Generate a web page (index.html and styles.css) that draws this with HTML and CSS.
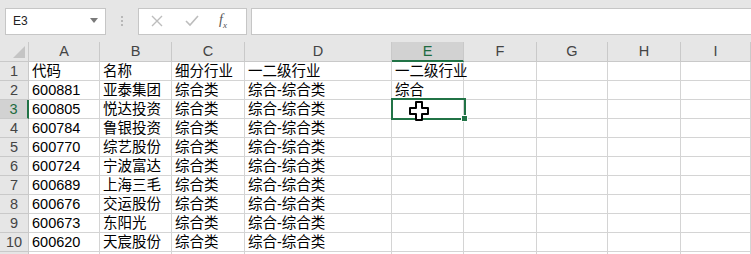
FILE: index.html
```html
<!DOCTYPE html>
<html lang="zh-CN">
<head>
    <meta charset="UTF-8">
    <title>Sheet</title>
    <link rel="stylesheet" href="styles.css">
</head>
<body>
    <div class="toolbar">
        <div class="namebox">
            <span>E3</span>
            <svg class="arrow" width="8" height="5" viewBox="0 0 8 5"><path d="M0 0H8L4 5Z" fill="#7a7a7a"/></svg>
        </div>
        <div class="dots"><i></i><i></i><i></i></div>
        <div class="fxbox">
            <svg class="btn" width="12" height="12" viewBox="0 0 12 12"><path d="M1 1L11 11M11 1L1 11" stroke="#bdbdbd" stroke-width="1.4" fill="none"/></svg>
            <svg class="btn" width="14" height="12" viewBox="0 0 14 12"><path d="M1 6L5 10L13 1" stroke="#bdbdbd" stroke-width="1.6" fill="none"/></svg>
            <span class="fx">f<sub>x</sub></span>
        </div>
        <div class="formula"></div>
    </div>

    <div class="sheet">
        <div class="grid" id="grid"></div>
        <div class="selection"><span class="handle"></span></div>
        <svg class="cursor" width="20" height="20" viewBox="0 0 20 20">
            <path d="M7 1H13V7H19V13H13V19H7V13H1V7H7Z" fill="#fff" stroke="#000" stroke-width="2" stroke-linejoin="round"/>
        </svg>
    </div>

    <script>
        const cols = ['A', 'B', 'C', 'D', 'E', 'F', 'G', 'H', 'I'];
        const rows = [
            ['代码', '名称', '细分行业', '一二级行业', '一二级行业'],
            ['600881', '亚泰集团', '综合类', '综合-综合类', '综合'],
            ['600805', '悦达投资', '综合类', '综合-综合类', ''],
            ['600784', '鲁银投资', '综合类', '综合-综合类', ''],
            ['600770', '综艺股份', '综合类', '综合-综合类', ''],
            ['600724', '宁波富达', '综合类', '综合-综合类', ''],
            ['600689', '上海三毛', '综合类', '综合-综合类', ''],
            ['600676', '交运股份', '综合类', '综合-综合类', ''],
            ['600673', '东阳光', '综合类', '综合-综合类', ''],
            ['600620', '天宸股份', '综合类', '综合-综合类', ''],
            []
        ];
        const grid = document.getElementById('grid');
        let html = '<div class="corner"><span></span></div>';
        cols.forEach(c => {
            html += '<div class="colhead' + (c === 'E' ? ' active' : '') + '">' + c + '</div>';
        });
        rows.forEach((r, i) => {
            // last row only peeks in at the bottom edge, its number is not visible
            const label = r.length ? i + 1 : '';
            html += '<div class="rowhead' + (i === 2 ? ' active' : '') + '">' + label + '</div>';
            cols.forEach((c, j) => {
                html += '<div class="cell">' + (r[j] || '') + '</div>';
            });
        });
        grid.innerHTML = html;
    </script>
</body>
</html>
```

FILE: styles.css
```css
body {
    margin: 0;
    background-color: #e6e6e6;
    font-family: "Liberation Sans", "Noto Sans CJK SC", sans-serif;
    overflow: hidden;
}
.toolbar {
    display: flex;
    align-items: center;
    height: 42px;
    padding: 0 0 0 5px;
    box-sizing: border-box;
}
.namebox {
    display: flex;
    align-items: center;
    justify-content: space-between;
    width: 101px;
    height: 27px;
    box-sizing: border-box;
    padding: 0 7px 0 7px;
    background-color: #fff;
    border: 1px solid #c6c6c6;
    font-size: 12px;
    color: #222;
}
.arrow {
    margin-top: -2px;
}
.dots {
    display: flex;
    flex-direction: column;
    gap: 2px;
    width: 32px;
    align-items: center;
}
.dots i {
    width: 2px;
    height: 2px;
    background-color: #b8b8b8;
}
.fxbox {
    display: flex;
    align-items: center;
    width: 109px;
    height: 27px;
    box-sizing: border-box;
    padding: 0 0 0 12px;
    gap: 22px;
    background-color: #fff;
    border: 1px solid #c6c6c6;
}
.fx {
    font-family: "Liberation Serif", serif;
    font-style: italic;
    font-size: 14px;
    color: #555;
    margin-left: -2px;
}
.fx sub {
    font-size: 9px;
}
.formula {
    flex: 1;
    height: 27px;
    margin-left: 4px;
    box-sizing: border-box;
    background-color: #fff;
    border: 1px solid #c6c6c6;
    border-right: none;
}
.sheet {
    position: relative;
    background-color: #fff;
}
.grid {
    display: grid;
    grid-template-columns: 29px 71px 72px 73px 147px 72px 73px 71px 73px 1fr;
    grid-template-rows: 20px;
    grid-auto-rows: 19px;
}
.grid div {
    box-sizing: border-box;
    border-right: 1px solid #d4d4d4;
    border-bottom: 1px solid #d4d4d4;
    font-size: 14.5px;
    line-height: 18px;
    white-space: nowrap;
    overflow: hidden;
}
.corner,
.colhead,
.rowhead {
    background-color: #e6e6e6;
    color: #444;
}
.grid .corner {
    position: relative;
    border-color: #c9c9c9;
}
.corner span {
    position: absolute;
    right: 3px;
    bottom: 3px;
    border-left: 12px solid transparent;
    border-bottom: 12px solid #c4c4c4;
}
.grid .colhead {
    text-align: center;
    line-height: 19px;
    border-color: #c9c9c9;
}
.grid .rowhead {
    text-align: center;
    border-color: #c9c9c9;
}
.grid .colhead.active {
    background-color: #d2d2d2;
    color: #1e6b40;
    border-bottom: 2px solid #217346;
}
.grid .rowhead.active {
    background-color: #d2d2d2;
    color: #1e6b40;
    border-right: 2px solid #217346;
}
/* text spills into the empty cell on its right, like a spreadsheet */
.grid .cell {
    padding-left: 3px;
    color: #000;
    overflow: visible;
}
.selection {
    position: absolute;
    left: 391px;
    top: 56px;
    width: 75px;
    height: 22px;
    box-sizing: border-box;
    border: 2px solid #217346;
}
.handle {
    position: absolute;
    right: -4px;
    bottom: -4px;
    width: 5px;
    height: 5px;
    background-color: #217346;
    border: 1px solid #fff;
}
.cursor {
    position: absolute;
    left: 409px;
    top: 59px;
}
```
